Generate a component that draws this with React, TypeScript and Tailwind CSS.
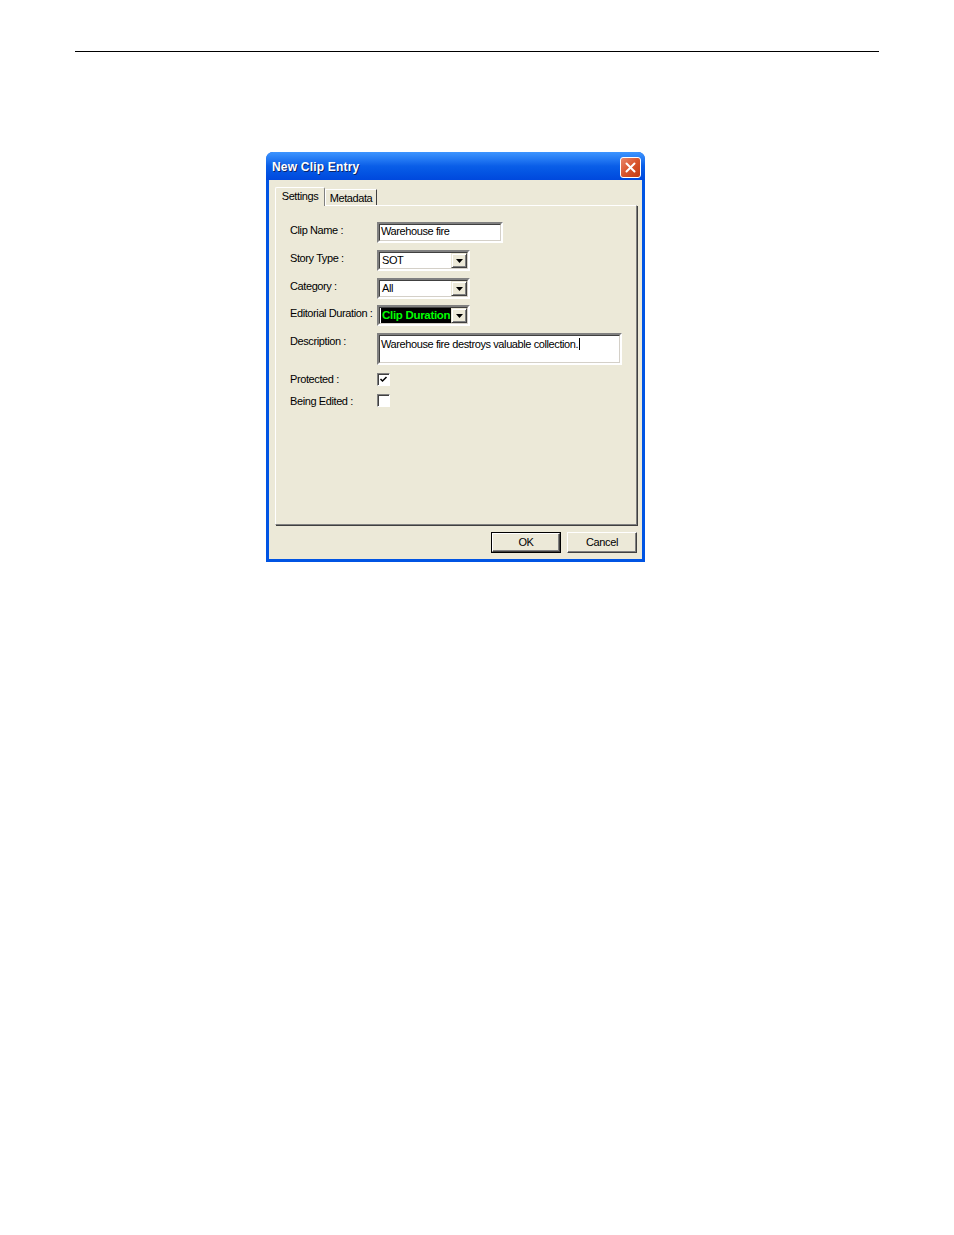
// New Clip Entry dialog (Windows XP style) on a white document page.

const sunken = 'border-t-[#808080] border-l-[#808080] border-b-white border-r-white'

function Campo({ children, className = '' }: { children: React.ReactNode; className?: string }) {
  return (
    <div className={`border-2 ${sunken} bg-white ${className}`}>
      <div className="h-full w-full border border-t-[#404040] border-l-[#404040] border-b-[#d4d0c8] border-r-[#d4d0c8]">{children}</div>
    </div>
  )
}

function Seta() {
  return (
    <div className="flex h-full w-[16px] shrink-0 items-center justify-center border border-t-[#ece9d8] border-l-[#ece9d8] border-b-[#404040] border-r-[#404040] bg-[#ece9d8] shadow-[inset_1px_1px_0_#fff,inset_-1px_-1px_0_#808080]">
      <svg width="7" height="4" viewBox="0 0 7 4">
        <path d="M0 0h7L3.5 4z" fill="#000" />
      </svg>
    </div>
  )
}

function Lista({ valor, destaque = false }: { valor: string; destaque?: boolean }) {
  return (
    <Campo className="h-[21px] w-[93px]">
      <div className="flex h-full items-stretch">
        <div className="flex min-w-0 flex-1 items-center overflow-hidden px-px">
          {destaque ? (
            <span className="flex h-full flex-1 items-center whitespace-nowrap bg-black px-[1px] text-[11.5px] font-bold tracking-[-0.3px] text-[#00ff00]">
              {valor}
            </span>
          ) : (
            <span className="px-[1px]">{valor}</span>
          )}
        </div>
        <Seta />
      </div>
    </Campo>
  )
}

function Caixa({ marcada }: { marcada: boolean }) {
  return (
    <div className={`h-[13px] w-[13px] border ${sunken} bg-white shadow-[inset_1px_1px_0_#404040]`}>
      {marcada && (
        <svg width="11" height="11" viewBox="0 0 11 11">
          <path d="M2.5 5l2 2 4-4" stroke="#000" strokeWidth="1.5" fill="none" />
        </svg>
      )}
    </div>
  )
}

function Linha({ rotulo, children, className = '' }: { rotulo: string; children: React.ReactNode; className?: string }) {
  return (
    <div className={`flex items-start ${className}`}>
      <span className="w-[87px] shrink-0 whitespace-nowrap">{rotulo}</span>
      {children}
    </div>
  )
}

function Botao({ texto, padrao = false }: { texto: string; padrao?: boolean }) {
  return (
    <div className={`h-[21px] w-[70px] ${padrao ? 'border border-black' : ''}`}>
      <div className="flex h-full w-full items-center justify-center border border-t-white border-l-white border-b-[#404040] border-r-[#404040] bg-[#ece9d8] shadow-[inset_-1px_-1px_0_#808080]">
        {texto}
      </div>
    </div>
  )
}

export default function App() {
  return (
    <div className="h-[1235px] w-[954px] bg-white pt-[51px] font-['Liberation_Sans',Arial,sans-serif] text-[11px] tracking-[-0.4px] text-black">
      <div className="ml-[75px] h-px w-[804px] bg-black" />

      <div className="ml-[266px] mt-[100px] flex h-[410px] w-[379px] flex-col overflow-hidden rounded-t-[7px] bg-[#0054e3]">
        {/* barra de título */}
        <div className="flex h-[28px] shrink-0 items-center justify-between bg-gradient-to-b from-[#3d95ff] via-[#0a5ee8] to-[#0048dd] pl-[6px] pr-[4px] pt-[2px]">
          <span className="text-[12px] font-bold tracking-[0.2px] text-white [text-shadow:1px_1px_0_#0a246a]">New Clip Entry</span>
          <div className="flex h-[21px] w-[21px] items-center justify-center rounded-[3px] border border-white bg-gradient-to-br from-[#e8866a] via-[#d9542b] to-[#c23a12]">
            <svg width="11" height="11" viewBox="0 0 11 11">
              <path d="M1.5 1.5l8 8M9.5 1.5l-8 8" stroke="#fff" strokeWidth="2" strokeLinecap="round" />
            </svg>
          </div>
        </div>

        {/* corpo */}
        <div className="mx-[3px] mb-[3px] flex flex-1 flex-col bg-[#ece9d8] pl-[6px] pr-[5px] pt-[7px]">
          <div className="flex items-end">
            <div className="relative z-10 -mb-px flex h-[19px] w-[50px] items-center justify-center rounded-t-[2px] border border-b-0 border-t-white border-l-white border-r-[#808080] bg-[#ece9d8] pb-[2px]">
              Settings
            </div>
            <div className="flex h-[16px] w-[52px] items-center justify-center border border-b-0 border-t-white border-l-white border-r-[#404040] bg-[#ece9d8] pt-[1px]">
              Metadata
            </div>
          </div>

          <div className="flex h-[320px] flex-col border border-t-white border-l-white border-b-[#808080] border-r-[#808080] pl-[14px] pt-[16px] shadow-[1px_1px_0_#404040]">
            <Linha rotulo="Clip Name :">
              <Campo className="h-[21px] w-[126px]">
                <span className="block px-[1px] leading-[13px]">Warehouse fire</span>
              </Campo>
            </Linha>
            <Linha rotulo="Story Type :" className="mt-[7px]">
              <Lista valor="SOT" />
            </Linha>
            <Linha rotulo="Category :" className="mt-[7px]">
              <Lista valor="All" />
            </Linha>
            <Linha rotulo="Editorial Duration :" className="mt-[6px]">
              <Lista valor="Clip Duration" destaque />
            </Linha>
            <Linha rotulo="Description :" className="mt-[7px]">
              <Campo className="h-[32px] w-[245px]">
                <span className="block px-[1px] leading-[13px]">
                  Warehouse fire destroys valuable collection.
                  <span className="ml-px inline-block h-[12px] w-px translate-y-[2px] bg-black" />
                </span>
              </Campo>
            </Linha>
            <div className="mt-[6px] flex items-center">
              <span className="w-[87px] shrink-0">Protected :</span>
              <Caixa marcada />
            </div>
            <div className="mt-[5px] flex items-center">
              <span className="w-[87px] shrink-0">Being Edited :</span>
              <Caixa marcada={false} />
            </div>
          </div>

          <div className="mt-[7px] flex justify-end gap-[6px]">
            <Botao texto="OK" padrao />
            <Botao texto="Cancel" />
          </div>
        </div>
      </div>
    </div>
  )
}
